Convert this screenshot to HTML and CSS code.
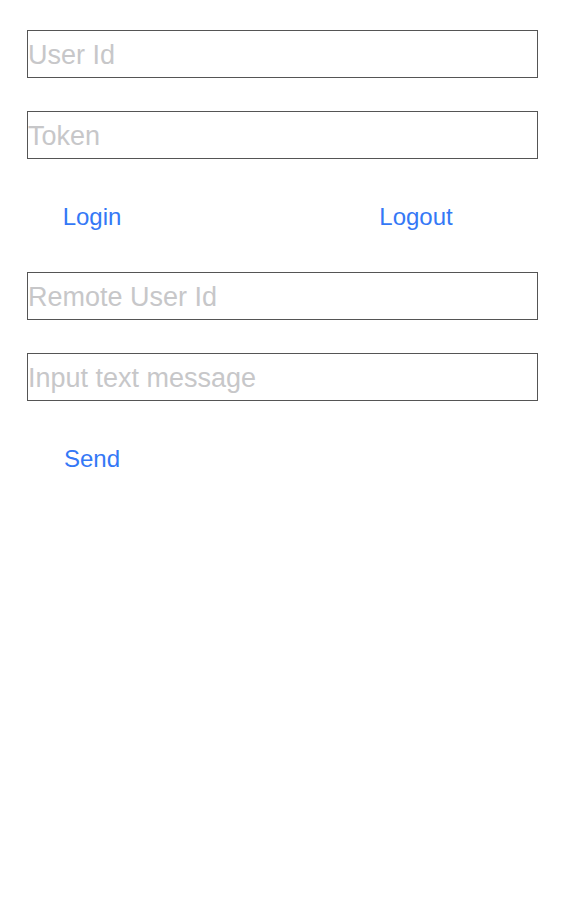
FILE: index.html
```html
<!DOCTYPE html>
<html>
<head>
<meta charset="utf-8">
<link rel="stylesheet" href="styles.css">
</head>
<body>
<main class="form">
  <input class="field" type="text" placeholder="User Id">
  <input class="field" type="text" placeholder="Token">
  <div class="row row-split">
    <button class="btn">Login</button>
    <button class="btn">Logout</button>
  </div>
  <input class="field" type="text" placeholder="Remote User Id">
  <input class="field" type="text" placeholder="Input text message">
  <div class="row">
    <button class="btn">Send</button>
  </div>
</main>
</body>
</html>
```
FILE: styles.css
```css
html, body {
  margin: 0;
  padding: 0;
  background: #ffffff;
}
.form {
  display: flex;
  flex-direction: column;
  gap: 33px;
  width: 511px;
  padding: 30px 0 0 27px;
}
.field {
  box-sizing: border-box;
  width: 511px;
  height: 48px;
  margin: 0;
  padding: 2px 0 0 0;
  border: 1px solid #555555;
  border-radius: 0;
  outline: none;
  background: #fff;
  font-family: "Liberation Sans", Arial, sans-serif;
  font-size: 27px;
  color: #000;
}
.field::placeholder {
  color: #c7c7c9;
}
.row {
  display: flex;
  height: 48px;
  align-items: center;
}
.row-split {
  height: 47px;
  justify-content: space-between;
  padding-right: 57px;
}
.btn {
  width: 130px;
  height: 48px;
  margin: 0;
  padding: 2px 0 0 0;
  border: none;
  background: transparent;
  font-family: "Liberation Sans", Arial, sans-serif;
  font-size: 24px;
  color: #3478f6;
  text-align: center;
}
```
